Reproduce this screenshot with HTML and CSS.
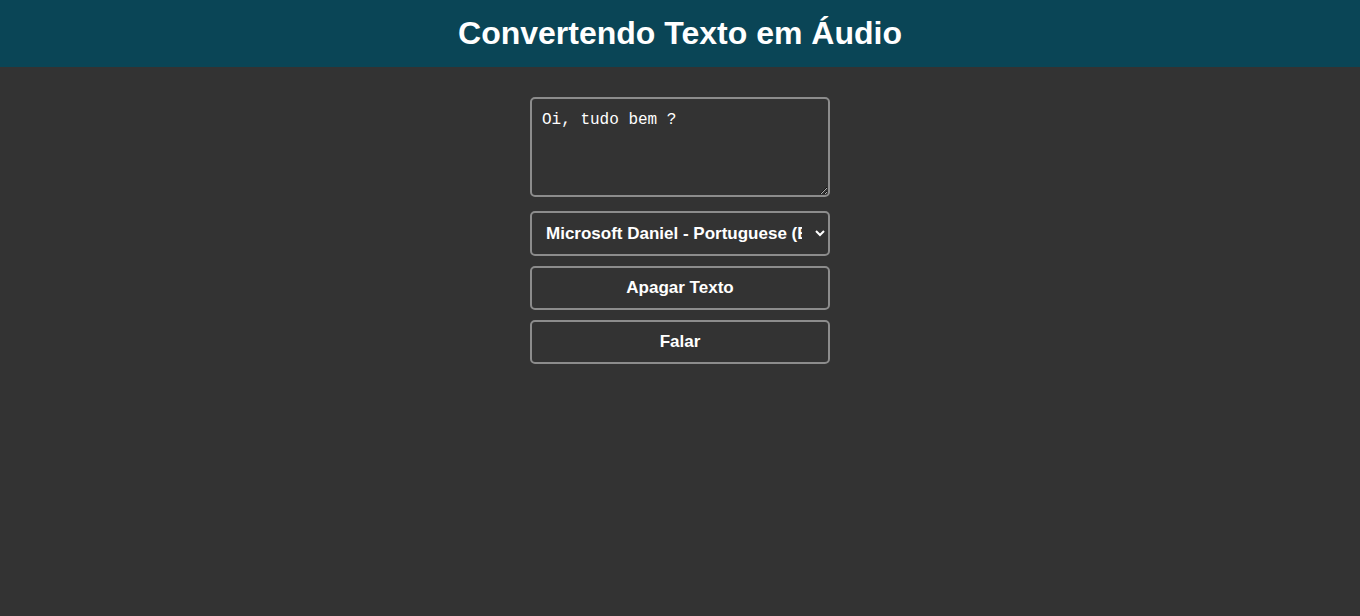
FILE: index.html
```html
<!DOCTYPE html>
<html lang="pt-BR">
<head>
<meta charset="utf-8">
<title>Convertendo Texto em Áudio</title>
<link rel="stylesheet" href="styles.css">
</head>
<body>
<header class="topbar">
  <h1 class="title">Convertendo Texto em Áudio</h1>
</header>
<main class="panel">
  <textarea class="field text-input">Oi, tudo bem ?</textarea>
  <select class="field voice-select">
    <option>Microsoft Daniel - Portuguese (Brazil)</option>
  </select>
  <button class="field action">Apagar Texto</button>
  <button class="field action">Falar</button>
</main>
</body>
</html>
```
FILE: styles.css
```css
* { box-sizing: border-box; }
html, body {
  margin: 0;
  padding: 0;
  background: #333333;
  font-family: "Liberation Sans", Arial, sans-serif;
  color: #ffffff;
}
.topbar {
  height: 67px;
  background: #0a4556;
  display: flex;
  align-items: center;
  justify-content: center;
}
.title {
  margin: 0;
  font-size: 32px;
  font-weight: bold;
  color: #ffffff;
}
.panel {
  width: 300px;
  margin: 30px auto 0;
  display: flex;
  flex-direction: column;
}
.field {
  width: 300px;
  background: transparent;
  border: 2px solid #8c8c8c;
  border-radius: 5px;
  color: #ffffff;
  outline: none;
}
.text-input {
  height: 100px;
  padding: 11px 10px 10px;
  font-family: "Liberation Mono", "DejaVu Sans Mono", monospace;
  font-size: 16px;
  line-height: 20px;
  resize: vertical;
  margin-bottom: 14px;
}
.voice-select {
  height: 45px;
  padding: 0 10px 0 10px;
  font-family: "Liberation Sans", Arial, sans-serif;
  font-size: 17px;
  font-weight: bold;
  color-scheme: dark;
  margin-bottom: 10px;
}
.voice-select option {
  background: #333333;
  color: #ffffff;
}
.action {
  height: 44px;
  font-family: "Liberation Sans", Arial, sans-serif;
  font-size: 17px;
  font-weight: bold;
  margin-bottom: 10px;
  cursor: pointer;
}
```
